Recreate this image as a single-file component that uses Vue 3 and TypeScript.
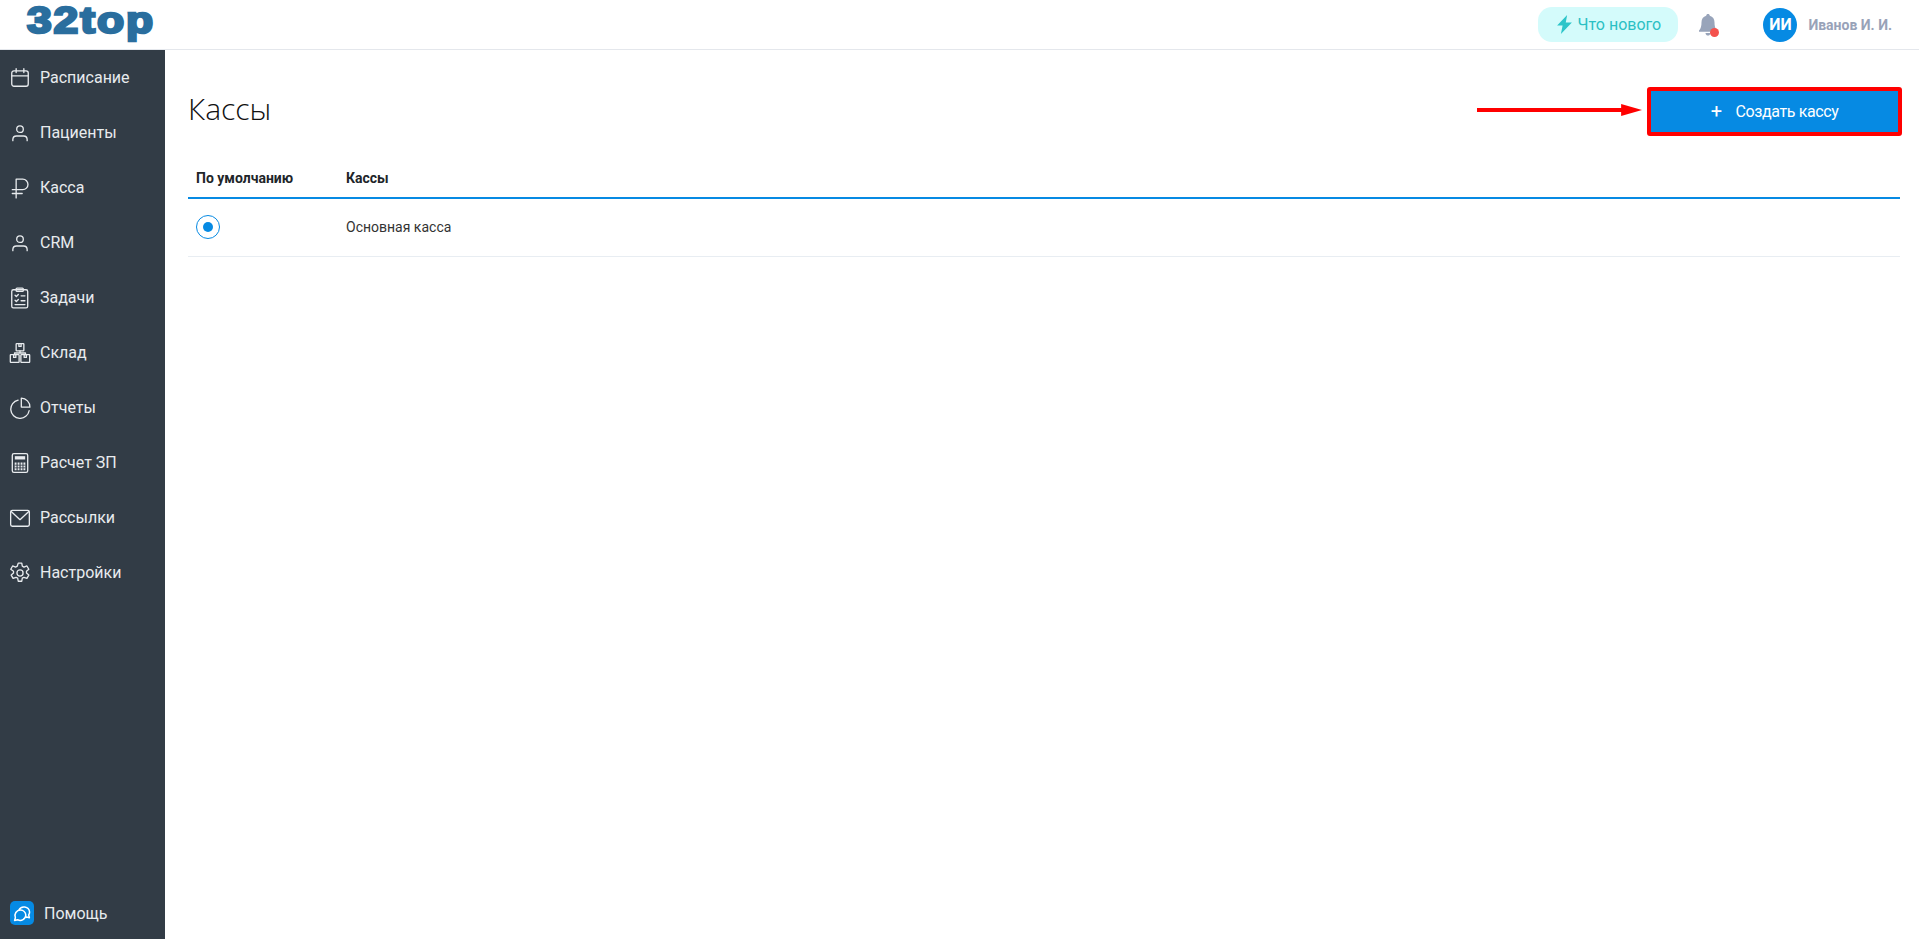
<script setup lang="ts">
interface NavItem {
  label: string;
  icon: string;
}

const navItems: NavItem[] = [
  { label: "Расписание", icon: "calendar" },
  { label: "Пациенты", icon: "user" },
  { label: "Касса", icon: "ruble" },
  { label: "CRM", icon: "user" },
  { label: "Задачи", icon: "tasks" },
  { label: "Склад", icon: "boxes" },
  { label: "Отчеты", icon: "pie" },
  { label: "Расчет ЗП", icon: "calc" },
  { label: "Рассылки", icon: "mail" },
  { label: "Настройки", icon: "gear" },
];
</script>

<template>
  <div class="page">
    <header class="topbar">
      <div class="logo">32top</div>
      <div class="topbar-right">
        <div class="whats-new">
          <svg class="bolt" viewBox="0 0 16 18" width="17" height="19">
            <path d="M10.5 0 1 10h5.2L4.600 18 15 7H9.200z" fill="#2cc5c9" />
          </svg>
          <span>Что нового</span>
        </div>
        <div class="bell">
          <svg viewBox="0 0 20 22" width="20" height="24">
            <path
              d="M10 0c1 0 1.700.7 1.800 1.700 3 .8 4.700 3.300 4.700 6.500 0 3.700.6 6.300 2.500 8.300v1.200H1v-1.200c1.900-2 2.500-4.600 2.500-8.300 0-3.200 1.700-5.700 4.700-6.500C8.300.7 9 0 10 0zM7.500 19h5c0 1.500-1.100 2.600-2.500 2.600S7.500 20.500 7.500 19z"
              fill="#98a4ba"
            />
          </svg>
          <span class="bell-dot"></span>
        </div>
        <div class="avatar">ИИ</div>
        <div class="username">Иванов И. И.</div>
      </div>
    </header>

    <div class="body">
      <aside class="sidebar">
        <nav class="nav">
          <a v-for="item in navItems" :key="item.label" class="nav-item">
            <svg
              class="nav-icon"
              viewBox="0 0 20 20"
              width="22"
              height="22"
              fill="none"
              stroke="#e8ebee"
              stroke-width="1.200"
              stroke-linecap="round"
              stroke-linejoin="round"
            >
              <template v-if="item.icon === 'calendar'">
                <rect x="2.500" y="3.500" width="15" height="14" rx="2" />
                <path d="M2.500 8h15M6.500 1.500v3.500M13.500 1.500v3.500" />
              </template>
              <template v-else-if="item.icon === 'user'">
                <circle cx="10" cy="6.500" r="3" />
                <path d="M3.500 17v-1c0-2 1.500-3.300 3.300-3.300h6.400c1.800 0 3.300 1.300 3.300 3.300v1" />
              </template>
              <template v-else-if="item.icon === 'ruble'">
                <path d="M6.500 19V2h6a4.500 4.500 0 0 1 0 9.500H3M3 15h9" />
              </template>
              <template v-else-if="item.icon === 'tasks'">
                <rect x="2.500" y="2.500" width="14.500" height="16.500" rx="1.500" />
                <rect x="6.500" y="1" width="6.500" height="3" rx=".8" />
                <path d="M5.500 7.500l1.200 1.200L8.500 6.800M5.500 12l1.200 1.200 1.800-1.900M11 8h3.500M11 12.500h3.500M5.500 16h9" />
              </template>
              <template v-else-if="item.icon === 'boxes'">
                <rect x="6.500" y="1.500" width="7" height="6.500" rx=".5" />
                <rect x="1.200" y="11.500" width="8" height="7" rx=".5" />
                <rect x="10.800" y="11.500" width="8" height="7" rx=".5" />
                <path d="M10 8v2M5 11.500V10h10v1.500M9 1.500v2.500h2V1.500" />
                <path d="M4.200 11.500v2.500h2v-2.500M13.800 11.500v2.500h2v-2.500" />
              </template>
              <template v-else-if="item.icon === 'pie'">
                <path d="M8.300 2.800A8.400 8.400 0 1 0 18.300 12.500" />
                <path d="M11.200 1a8 8 0 0 1 7.800 8.200h-7.800z" />
              </template>
              <template v-else-if="item.icon === 'calc'">
                <rect x="3" y="1.500" width="14" height="17" rx="1.500" />
                <rect x="5.300" y="3.800" width="9.400" height="3" fill="#e8ebee" stroke="none" />
                <path d="M6 9.500v7M8.700 9.500v7M11.400 9.500v7M14 9.500v7" stroke-width="1.700" stroke-linecap="butt" />
                <path d="M5 12h10M5 14.400h10" stroke="#333c46" stroke-width=".7" stroke-linecap="butt" />
              </template>
              <template v-else-if="item.icon === 'mail'">
                <rect x="1.500" y="3" width="17" height="14.500" rx="1.500" />
                <path d="M2 4l8 7.500L18 4" />
              </template>
              <template v-else>
                <circle cx="10" cy="10" r="2.800" />
                <path d="M8.400 1h3.200l.5 2.800 1.500.8 2.700-1 1.700 3-2.100 1.800v1.700l2.100 1.800-1.700 3-2.700-1-1.500.8-.5 2.800H8.400l-.5-2.800-1.500-.8-2.700 1-1.700-3 2.100-1.800V8.400L1.600 6.600l1.700-3 2.700 1 1.500-.8z" />
              </template>
            </svg>
            <span>{{ item.label }}</span>
          </a>
        </nav>
        <a class="help">
          <span class="help-icon">
            <svg viewBox="0 0 24 24" width="24" height="24" fill="none" stroke="#fff" stroke-width="1.500" stroke-linejoin="round">
              <path d="M10.500 9A5.500 5.500 0 0 0 5.400 16.700l-.8 2.800 3-.8A5.500 5.500 0 0 0 15.800 14 5.500 5.500 0 0 0 10.500 9z" />
              <path d="M8.800 9.300A5.700 5.700 0 0 1 19.600 11c0 1.100-.3 2.100-.9 3l.7 2.700-2.700-.7-1 .5" />
            </svg>
          </span>
          <span>Помощь</span>
        </a>
      </aside>

      <main class="content">
        <div class="content-head">
          <h1 class="title">Кассы</h1>
          <div class="head-actions">
            <svg class="arrow" viewBox="0 0 166 14" width="165" height="14">
              <path d="M0 7h146" stroke="#f00" stroke-width="4" />
              <path d="M145 1l21 6-21 6z" fill="#f00" />
            </svg>
            <button class="create-btn" type="button">
              <span class="plus">+</span>
              <span>Создать кассу</span>
            </button>
          </div>
        </div>

        <div class="table">
          <div class="row head-row">
            <div class="col-default">По умолчанию</div>
            <div class="col-name">Кассы</div>
          </div>
          <div class="row data-row">
            <div class="col-default">
              <span class="radio"><span class="radio-dot"></span></span>
            </div>
            <div class="col-name">Основная касса</div>
          </div>
        </div>
      </main>
    </div>
  </div>
</template>

<style>
html,
body {
  margin: 0;
  background: #fff;
}
</style>

<style scoped>
.page {
  width: 1919px;
  height: 939px;
  display: flex;
  flex-direction: column;
  overflow: hidden;
  font-family: Roboto, "Liberation Sans", sans-serif;
}

.topbar {
  height: 50px;
  box-sizing: border-box;
  flex: none;
  display: flex;
  align-items: center;
  justify-content: space-between;
  border-bottom: 1px solid #e4e7ec;
  padding: 0 27px;
}

.logo {
  align-self: flex-start;
  font-family: "Liberation Sans", Arial, sans-serif;
  font-weight: 700;
  font-size: 37px;
  line-height: 42px;
  letter-spacing: 1.600px;
  color: #2a6e9e;
  -webkit-text-stroke: 2.500px #2a6e9e;
  transform: scaleX(1.2);
  transform-origin: left center;
}

.topbar-right {
  display: flex;
  align-items: center;
}

.whats-new {
  width: 140px;
  height: 35px;
  box-sizing: border-box;
  border-radius: 14px;
  background: #d4fbfb;
  color: #2bc0c4;
  font-size: 16px;
  display: flex;
  align-items: center;
  justify-content: center;
  gap: 5px;
  margin-right: 20px;
  padding-bottom: 1px;
}

.bell {
  position: relative;
  width: 20px;
  height: 24px;
  margin-right: 45px;
}

.bell-dot {
  position: absolute;
  right: -1px;
  bottom: 0;
  width: 9px;
  height: 9px;
  border-radius: 50%;
  background: #f4524d;
}

.avatar {
  width: 34px;
  height: 34px;
  border-radius: 50%;
  background: #068ae3;
  color: #fff;
  font-weight: 700;
  font-size: 16px;
  display: flex;
  align-items: center;
  justify-content: center;
  margin-right: 11px;
}

.username {
  color: #98a2b8;
  font-weight: 700;
  font-size: 14px;
}

.body {
  flex: 1;
  display: flex;
  min-height: 0;
}

.sidebar {
  width: 165px;
  flex: none;
  background: #323c46;
  display: flex;
  flex-direction: column;
  justify-content: space-between;
  color: #e8ebee;
  font-size: 16px;
}

.nav {
  display: flex;
  flex-direction: column;
}

.nav-item {
  height: 55px;
  display: flex;
  align-items: center;
  padding-left: 9px;
  gap: 9px;
}

.nav-icon {
  flex: none;
}

.help {
  display: flex;
  align-items: center;
  gap: 10px;
  padding: 0 0 14px 10px;
}

.help-icon {
  width: 24px;
  height: 24px;
  border-radius: 5px;
  background: #068ae3;
  display: block;
}

.content {
  flex: 1;
  padding: 37px 17px 0 23px;
  min-width: 0;
}

.content-head {
  display: flex;
  align-items: center;
  justify-content: space-between;
  height: 48px;
}

.title {
  margin: 0 0 5px;
  font-family: "Open Sans", sans-serif;
  font-weight: 300;
  font-size: 30px;
  color: #111;
}

.head-actions {
  display: flex;
  align-items: center;
  gap: 5px;
}

.arrow {
  margin-top: -2px;
}

.create-btn {
  width: 255px;
  height: 49px;
  box-sizing: border-box;
  border: 4px solid #f00;
  border-radius: 3px;
  background: #068ae3;
  color: #fff;
  font-family: inherit;
  font-size: 16px;
  letter-spacing: -0.4px;
  display: flex;
  align-items: center;
  justify-content: center;
  gap: 14px;
  padding: 0;
}

.plus {
  font-size: 20px;
  line-height: 1;
}

.table {
  margin-top: 17px;
  width: calc(100% - 2px);
}

.row {
  display: flex;
  padding-left: 8px;
  font-size: 14px;
}

.head-row {
  height: 47px;
  box-sizing: border-box;
  padding-top: 7px;
  align-items: center;
  border-bottom: 2px solid #068ae3;
  font-weight: 700;
  color: #212529;
}

.data-row {
  height: 58px;
  box-sizing: border-box;
  padding-bottom: 1px;
  align-items: center;
  border-bottom: 1px solid #e8edf2;
  color: #333;
}

.col-default {
  width: 150px;
  flex: none;
  display: flex;
  align-items: center;
}

.radio {
  width: 24px;
  height: 24px;
  box-sizing: border-box;
  border: 1px solid #068ae3;
  border-radius: 50%;
  display: flex;
  align-items: center;
  justify-content: center;
}

.radio-dot {
  width: 10px;
  height: 10px;
  border-radius: 50%;
  background: #068ae3;
}
</style>
